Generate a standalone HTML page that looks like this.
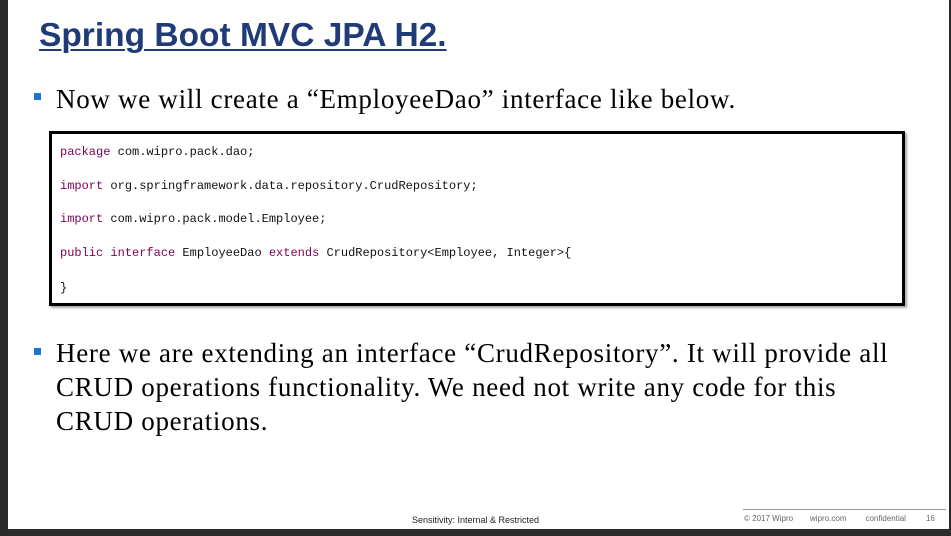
<!DOCTYPE html>
<html><head><style>
body{margin:0;width:951px;height:536px;overflow:hidden;background:#fff;position:relative;font-family:"Liberation Sans",sans-serif}
.a{position:absolute}
.code{font-family:"Liberation Mono",monospace;font-size:12px;color:#111;white-space:pre;position:absolute;left:60px}
.k{color:#7f0055}
.serif{font-family:"Liberation Serif",serif;font-size:27px;letter-spacing:0.7px;color:#000;line-height:34px}
.bul{position:absolute;width:7px;height:7px;background:#1c75c8}
</style></head><body>
<div class="a" style="left:0;top:0;width:8px;height:536px;background:#2b2b2b"></div>
<div class="a" style="left:0;top:529px;width:951px;height:7px;background:#2b2b2b"></div>
<div class="a" style="left:949px;top:0;width:2px;height:536px;background:#2b2b2b"></div>
<div class="a" style="left:39px;top:17px;font-weight:bold;font-size:33.5px;color:#1f3c78;text-decoration:underline;text-decoration-thickness:2px;text-underline-offset:3px">Spring Boot MVC JPA H2.</div>
<div class="bul" style="left:34px;top:93px"></div>
<div class="a serif" style="left:56px;top:82px">Now we will create a “EmployeeDao” interface like below.</div>
<div class="a" style="left:49px;top:131px;width:850px;height:169px;border:3px solid #000;box-shadow:2px 2px 2px #aaa"></div>
<div class="code" style="top:145px"><span class="k">package</span> com.wipro.pack.dao;</div>
<div class="code" style="top:179px"><span class="k">import</span> org.springframework.data.repository.CrudRepository;</div>
<div class="code" style="top:212px"><span class="k">import</span> com.wipro.pack.model.Employee;</div>
<div class="code" style="top:246px"><span class="k">public</span> <span class="k">interface</span> EmployeeDao <span class="k">extends</span> CrudRepository&lt;Employee, Integer&gt;{</div>
<div class="code" style="top:281px">}</div>
<div class="bul" style="left:34px;top:348px"></div>
<div class="a serif" style="left:56px;top:336px;width:890px">Here we are extending an interface “CrudRepository”. It will provide all<br>CRUD operations functionality. We need not write any code for this<br>CRUD operations.</div>
<div class="a" style="left:743px;top:509px;width:203px;height:1px;background:#999"></div>
<div class="a" style="left:412px;top:515px;font-size:9px;color:#222">Sensitivity: Internal &amp; Restricted</div>
<div class="a" style="left:744px;top:514px;font-size:8px;color:#666;word-spacing:0">© 2017 Wipro<span style="margin-left:17px">wipro.com</span><span style="margin-left:19px">confidential</span><span style="margin-left:20px">16</span></div>
</body></html>
